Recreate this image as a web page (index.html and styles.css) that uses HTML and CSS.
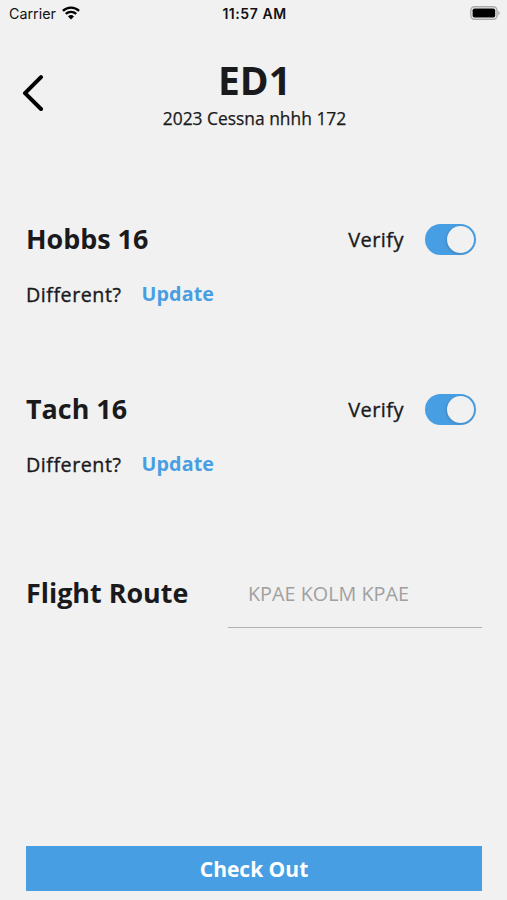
FILE: index.html
```html
<!DOCTYPE html>
<html lang="en">
<head>
<meta charset="utf-8">
<title>Check Out</title>
<link rel="stylesheet" href="styles.css">
</head>
<body>
<div class="screen">
  <div class="status">
    <div class="carrier"><span>Carrier</span>
      <svg class="wifi" viewBox="0 0 18 14" width="18" height="14"><path d="M.9 4.900A11.600 11.600 0 0 1 17.100 4.900M3.800 7.900A7.600 7.600 0 0 1 14.200 7.900" fill="none" stroke="#000" stroke-width="2.300"/><path d="M9 13.500L6 10.400A4.300 4.300 0 0 1 12 10.400Z"/></svg>
    </div>
    <time class="time">11:57 AM</time>
    <svg class="battery" viewBox="0 0 30 14" width="30" height="14"><rect x=".8" y=".7" width="26.200" height="12.600" rx="3.700" fill="none" stroke="#aaa" stroke-width="1.400"/><rect x="2.600" y="2.500" width="22.600" height="9" rx="1.800"/><path d="M28.200 4.700v4.600q1.500-.8 1.500-2.300t-1.500-2.300" fill="#aaa"/></svg>
  </div>
  <header class="header">
    <svg class="back" viewBox="0 0 22 36" width="22" height="36"><path d="M19 2.200L3 18.200L19 34" fill="none" stroke="#000" stroke-width="4" stroke-linecap="round" stroke-linejoin="round"/></svg>
    <div class="heading"><h1>ED1</h1><p>2023 Cessna nhhh 172</p></div>
  </header>
  <main>
    <section class="meter">
      <div class="row"><h2>Hobbs 16</h2><span class="verify">Verify</span><span class="switch"></span></div>
      <div class="sub"><span class="label">Different?</span><a class="update">Update</a></div>
    </section>
    <section class="meter">
      <div class="row"><h2>Tach 16</h2><span class="verify">Verify</span><span class="switch"></span></div>
      <div class="sub"><span class="label">Different?</span><a class="update">Update</a></div>
    </section>
    <section class="route"><h2>Flight Route</h2><div class="field">KPAE KOLM KPAE</div></section>
  </main>
  <button class="checkout">Check Out</button>
</div>
</body>
</html>
```
FILE: styles.css
```css
* { box-sizing: border-box; }
body { margin: 0; background: #f1f1f1; color: #1a1a1c; font-family: "Open Sans", sans-serif; }
h1, h2, p { margin: 0; }
.screen { height: 900px; display: flex; flex-direction: column; padding: 0 25px 9px 26px; overflow: hidden; }
.status { display: grid; grid-template-columns: 1fr auto 1fr; align-items: center; height: 27px; margin: 0 -18px 0 -17px; font-family: Inter, sans-serif; font-size: 14.3px; color: #111; }
.carrier { display: flex; align-items: center; gap: 6px; }
.wifi { margin-top: -1px; }
.time { font-weight: 600; font-size: 14px; letter-spacing: .55px; }
.battery { justify-self: end; margin-top: -1px; }
.header { display: grid; grid-template-columns: 22px 1fr 22px; align-items: center; height: 132px; margin: 0 -5px 0 -4px; }
.heading { text-align: center; padding-top: 2px; }
h1 { font-size: 39px; line-height: 48px; font-weight: 700; }
.heading p { font-size: 17.4px; line-height: 28px; -webkit-text-stroke: .25px currentColor; }
main { flex: 1; padding-top: 59px; }
.meter { height: 170px; }
.row { display: flex; align-items: center; height: 42px; padding-right: 6px; }
h2 { flex: 1; font-size: 26.9px; line-height: 36px; font-weight: 700; }
.row h2 { margin-top: -1px; }
.verify { font-size: 20px; letter-spacing: .45px; margin-right: 21px; -webkit-text-stroke: .35px currentColor; }
.switch { width: 51px; height: 31px; border-radius: 16px; background: #489ee3; display: flex; justify-content: flex-end; padding: 2px; }
.switch::after { content: ""; width: 27px; height: 27px; border-radius: 50%; background: #f1f1f1; box-shadow: -1px 1px 3px rgba(0, 0, 0, .15); }
.sub { display: flex; align-items: center; gap: 20px; height: 30px; margin-top: 19px; font-size: 19.7px; }
.label { letter-spacing: .53px; -webkit-text-stroke: .35px currentColor; }
.update { color: #489ee3; font-weight: 700; margin-top: -2px; letter-spacing: .1px; }
.route { display: flex; height: 70px; align-items: center; }
.field { width: 254px; height: 70px; border-bottom: 1px solid #b0b0b0; padding: 1px 20px 0; line-height: 70px; font-size: 19.8px; color: #a0a0a0; }
.checkout { height: 45px; border: 0; background: #489ee3; color: #fff; font: 700 21px "Open Sans", sans-serif; }
```
